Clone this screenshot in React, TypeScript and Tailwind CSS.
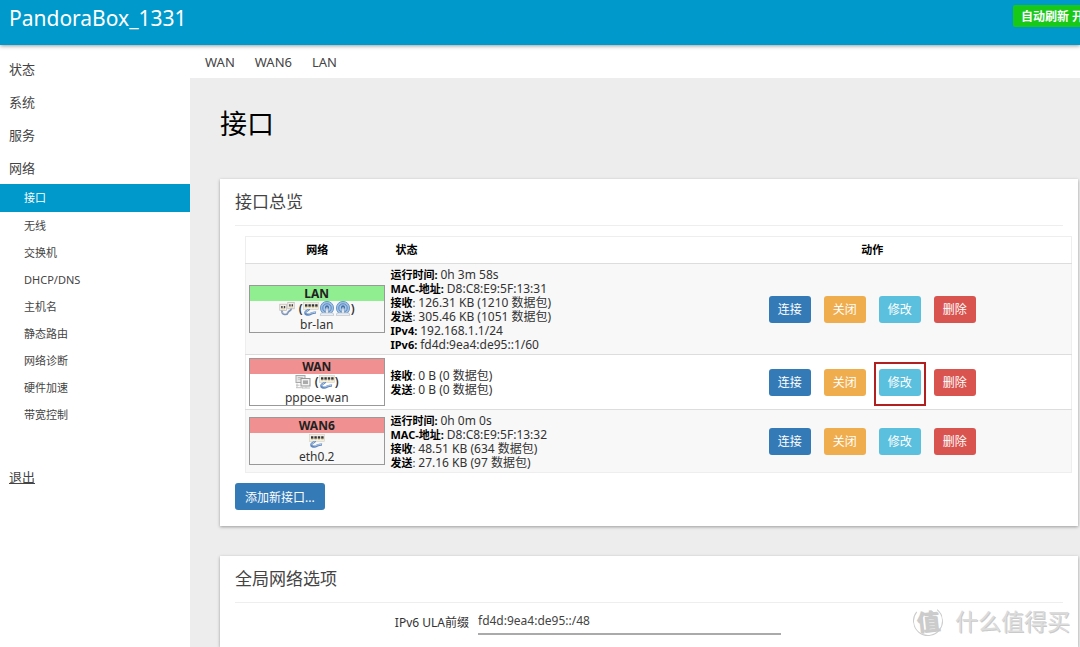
import type { ReactNode } from "react";
import clsx from "clsx";

const MENU = ["状态", "系统", "服务", "网络"];

const SUBMENU = [
  "接口",
  "无线",
  "交换机",
  "DHCP/DNS",
  "主机名",
  "静态路由",
  "网络诊断",
  "硬件加速",
  "带宽控制",
];

const ACTIONS = [
  { label: "连接", color: "bg-[#337ab7]" },
  { label: "关闭", color: "bg-[#f0ad4e]" },
  { label: "修改", color: "bg-[#5bc0de]" },
  { label: "删除", color: "bg-[#d9534f]" },
];

type Iface = {
  name: string;
  device: string;
  up: boolean;
  icons: ReactNode;
  status: [string, string][];
  marked?: string;
};

const INTERFACES: Iface[] = [
  {
    name: "LAN",
    device: "br-lan",
    up: true,
    icons: (
      <>
        <BridgeIcon />
        <span className="ml-1">(</span>
        <SwitchIcon />
        <WifiIcon />
        <WifiIcon />
        <span>)</span>
      </>
    ),
    status: [
      ["运行时间:", "0h 3m 58s"],
      ["MAC-地址:", "D8:C8:E9:5F:13:31"],
      ["接收", "126.31 KB (1210 数据包)"],
      ["发送", "305.46 KB (1051 数据包)"],
      ["IPv4:", "192.168.1.1/24"],
      ["IPv6:", "fd4d:9ea4:de95::1/60"],
    ],
  },
  {
    name: "WAN",
    device: "pppoe-wan",
    up: false,
    icons: (
      <>
        <TunnelIcon />
        <span className="ml-1">(</span>
        <SwitchIcon />
        <span>)</span>
      </>
    ),
    status: [
      ["接收", "0 B (0 数据包)"],
      ["发送", "0 B (0 数据包)"],
    ],
    marked: "修改",
  },
  {
    name: "WAN6",
    device: "eth0.2",
    up: false,
    icons: <SwitchIcon />,
    status: [
      ["运行时间:", "0h 0m 0s"],
      ["MAC-地址:", "D8:C8:E9:5F:13:32"],
      ["接收", "48.51 KB (634 数据包)"],
      ["发送", "27.16 KB (97 数据包)"],
    ],
  },
];

function SwitchIcon() {
  return (
    <svg viewBox="0 0 16 16" className="h-4 w-4">
      <rect x="0.5" y="1.5" width="15" height="6.8" fill="#f1eee2" stroke="#d3cfc0" strokeWidth="0.6" />
      <path d="M2 3.2h2.4v2.6H2zM5.4 3.2h2.4v2.6H5.4zM8.8 3.2h2.4v2.6H8.8zM12.2 3.2h2.4v2.6h-2.4z" fill="#34343a" />
      <path d="M2.2 6.2h2M5.6 6.2h2M9 6.2h2M12.4 6.2h2" stroke="#d3bf6c" strokeWidth="0.8" />
      <path d="M6 8c0 1.6-3.8 1.6-3.8 3.8 0 2.2 2.8 2.2 4.8 1.4s3-2 6-1.6" fill="none" stroke="#5f88bf" strokeWidth="2.2" />
      <path d="M5.4 8.4c0 1.6-3.2 1.6-3.2 3.2M5.6 13c2.4-.4 3.6-1.8 6.8-1.5" fill="none" stroke="#bcd2ea" strokeWidth="0.9" />
    </svg>
  );
}

function BridgeIcon() {
  return (
    <svg viewBox="0 0 16 16" className="h-4 w-4">
      <rect x="0.8" y="3.2" width="6.8" height="6.4" fill="#f3f1ea" stroke="#b9b7ae" strokeWidth="0.7" />
      <rect x="8.8" y="1.4" width="6.4" height="6.4" fill="#f3f1ea" stroke="#b9b7ae" strokeWidth="0.7" />
      <path d="M2.2 5h1.4v2.2H2.2zM4.8 5h1.4v2.2H4.8zM10.2 3.2h1.4v2.2h-1.4zM12.6 3.2H14v2.2h-1.4z" fill="#3d3d42" />
      <path d="M2.4 7.8h3.6M10.4 6h3.6" stroke="#cdbb75" strokeWidth="0.7" />
      <path d="M3 9.6c-.4 4.6 5.2 4.8 6 1.8C9.6 9.2 12.4 10.4 12.2 7.6" fill="none" stroke="#7e95ba" strokeWidth="1.8" />
      <path d="M3.4 10.6c.4 2.4 4 2.6 4.8.4" fill="none" stroke="#d0dcec" strokeWidth="0.7" />
    </svg>
  );
}

function WifiIcon() {
  return (
    <svg viewBox="0 0 16 16" className="h-4 w-4">
      <circle cx="8" cy="7" r="6.6" fill="#9fbfe2" stroke="#6f9bcd" />
      <circle cx="8" cy="7" r="4.2" fill="#a9c8e8" stroke="#5688c2" />
      <circle cx="8" cy="6.2" r="2" fill="#3d6dab" />
      <path d="M7.4 6h1.2l1.2 6.6H6.2z" fill="#e9f0f7" stroke="#6886ad" strokeWidth="0.6" />
      <path d="M2 12h12l.8 2.4H1.2z" fill="#eff2f4" stroke="#a9b6c4" strokeWidth="0.6" />
    </svg>
  );
}

function TunnelIcon() {
  return (
    <svg viewBox="0 0 16 16" className="h-4 w-4">
      <rect x="1" y="1.5" width="9" height="7" fill="#e7e7e7" stroke="#a9a9a9" />
      <path d="M2.8 3.5h5M2.8 5.2h3" stroke="#b5b5b5" strokeWidth="0.8" />
      <rect x="6" y="4.5" width="9" height="7.5" fill="#f2f2f2" stroke="#969696" />
      <rect x="8" y="6.4" width="5" height="3.6" fill="#aaa" />
      <path d="M2 9.5v4.2M1 11.2h3.6M1 13.7h7M7 14h8M11 12v2" fill="none" stroke="#c0c0c0" />
    </svg>
  );
}

function Header() {
  return (
    <header className="relative flex h-[45px] items-start justify-between overflow-hidden bg-[#0099cc] pl-[9px] shadow-[0_1px_4px_rgba(0,0,0,0.4)]">
      <a href="#" className="text-[21px] leading-9 text-white">
        PandoraBox_1331
      </a>
      <button className="-mr-3 mt-[5px] h-[22px] rounded-xs bg-[#18c918] px-2 pt-[2px] text-xs font-bold whitespace-nowrap text-white">
        自动刷新 开
      </button>
    </header>
  );
}

function Sidebar() {
  return (
    <nav className="w-[190px] shrink-0 bg-white pt-[7px] text-[#444]">
      <ul>
        {MENU.map((item) => (
          <li key={item}>
            <a href="#" className="block pt-[2px] pl-[9px] text-[13px] leading-[31px]">
              {item}
            </a>
          </li>
        ))}
      </ul>
      <ul>
        {SUBMENU.map((item, i) => (
          <li key={item}>
            <a
              href="#"
              className={clsx(
                "block pl-6 text-[11px]",
                i === 0 ? "bg-[#0099cc] leading-7 text-white" : "leading-[27px]",
              )}
            >
              {item}
            </a>
          </li>
        ))}
      </ul>
      <a href="#" className="mt-8 block pt-[2px] pl-[9px] text-[13px] leading-[31px] underline">
        退出
      </a>
    </nav>
  );
}

function Card({ title, className, children }: { title: string; className?: string; children: ReactNode }) {
  return (
    <section className={clsx("bg-white px-[15px] shadow-[0_1px_3px_rgba(0,0,0,0.35)]", className)}>
      <h2 className="border-b border-[#eee] text-[17px] leading-[46px] text-[#444]">{title}</h2>
      {children}
    </section>
  );
}

function IfaceBox({ iface }: { iface: Iface }) {
  return (
    <div className="border border-[#999] text-center text-xs">
      <div className={clsx("leading-[15px] font-bold text-[#222]", iface.up ? "bg-[#90ee90]" : "bg-[#f09090]")}>
        {iface.name}
      </div>
      <div className="flex h-4 items-center justify-center font-semibold">{iface.icons}</div>
      <div className="leading-[15px]">{iface.device}</div>
    </div>
  );
}

function InterfaceTable() {
  return (
    <div className="-mr-[9px] ml-[10px] pt-[10px]">
      <table className="w-full table-fixed border border-[#eee] text-[11px] leading-[14px] text-[#333]">
        <colgroup>
          <col className="w-[143px]" />
          <col className="w-[42%]" />
          <col className="w-[58%]" />
        </colgroup>
        <thead>
          <tr className="h-[27px] text-black">
            <th>网络</th>
            <th className="pl-[7px] text-left">状态</th>
            <th className="pr-[2px]">动作</th>
          </tr>
        </thead>
        <tbody>
          {INTERFACES.map((iface) => (
            <tr key={iface.name} className="border-t border-[#ddd] odd:bg-[#f8f8f8]">
              <td className="py-[3px] pr-1 pl-[3px]">
                <IfaceBox iface={iface} />
              </td>
              <td className="pt-1 pb-[2px] pl-[2px]">
                {iface.status.map(([key, value]) => (
                  <div key={key} className="h-[14px]">
                    <strong className="text-black">{key}</strong>
                    {key.endsWith(":") ? " " : ": "}
                    <span className="text-xs leading-[14px]">{value}</span>
                  </div>
                ))}
              </td>
              <td className="pr-[2px]">
                <div className="flex justify-center gap-[13px]">
                  {ACTIONS.map((a) => (
                    <div key={a.label} className="relative">
                      <button className={clsx("block h-[27px] w-[42px] rounded-[3px] pt-[2px] text-xs text-white", a.color)}>
                        {a.label}
                      </button>
                      {iface.marked === a.label && (
                        <span className="pointer-events-none absolute -inset-x-[5px] -top-[7px] -bottom-[10px] border-2 border-[#b02020]" />
                      )}
                    </div>
                  ))}
                </div>
              </td>
            </tr>
          ))}
        </tbody>
      </table>
    </div>
  );
}

function Watermark() {
  return (
    <div className="pointer-events-none absolute right-[10px] bottom-2 flex items-center gap-3 text-[#dcdcdc] [text-shadow:1px_1px_0_#cacaca]">
      <span className="flex h-[30px] w-[30px] -rotate-6 items-center justify-center rounded-full border border-[#ccc] border-t-transparent text-[23px] font-bold text-[#ccc]">
        值
      </span>
      <span className="text-[23px] leading-9">什么值得买</span>
    </div>
  );
}

export default function App() {
  return (
    <div className="relative flex min-h-screen flex-col overflow-hidden bg-[#ededed] font-['Noto_Sans','Noto_Sans_CJK_SC',sans-serif]">
      <Header />
      <div className="flex flex-1">
        <Sidebar />
        <main className="flex min-w-0 flex-1 flex-col">
          <nav className="flex h-[33px] items-center gap-5 bg-white pt-[2px] pl-[15px] text-[13px] text-[#444]">
            <a href="#">WAN</a>
            <a href="#">WAN6</a>
            <a href="#">LAN</a>
          </nav>
          <div className="flex flex-1 flex-col pr-[2px] pl-[30px]">
            <h1 className="pt-[25px] pb-[35px] text-[27px] leading-[41px] text-black">接口</h1>
            <Card title="接口总览" className="pb-4">
              <InterfaceTable />
              <button className="mt-[10px] block h-[27px] rounded-[3px] bg-[#337ab7] px-[10px] pt-[2px] text-xs text-white">
                添加新接口...
              </button>
            </Card>
            <Card title="全局网络选项" className="mt-[30px] flex-1">
              <div className="flex items-center pt-1">
                <label htmlFor="ula" className="w-[234px] shrink-0 pt-1 text-right text-xs text-[#333]">
                  IPv6 ULA前缀
                </label>
                <input
                  id="ula"
                  defaultValue="fd4d:9ea4:de95::/48"
                  className="ml-[9px] h-7 w-[303px] border-b-2 border-[#aaa] bg-transparent text-xs text-[#444] outline-none"
                />
              </div>
            </Card>
          </div>
        </main>
      </div>
      <Watermark />
    </div>
  );
}
